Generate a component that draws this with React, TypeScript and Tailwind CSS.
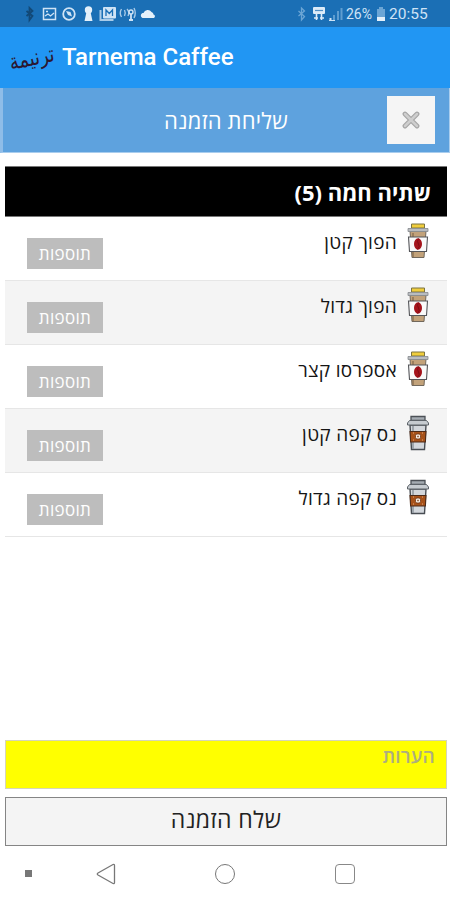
import React from "react";

type Drink = {
  name: string;
  cup: "latte" | "nes";
};

const drinks: Drink[] = [
  { name: "הפוך קטן", cup: "latte" },
  { name: "הפוך גדול", cup: "latte" },
  { name: "אספרסו קצר", cup: "latte" },
  { name: "נס קפה קטן", cup: "nes" },
  { name: "נס קפה גדול", cup: "nes" },
];

const LatteCup = () => (
  <svg width="22" height="36" viewBox="0 0 22 36">
    <path d="M3 8h16l-2 26.500H5z" fill="#c2a27a" stroke="#71685c" strokeWidth="1" />
    <path d="M6 10v24" stroke="#8d7254" strokeWidth="1.500" />
    <path d="M4.500 1h13v4h-13z" fill="#f0cd3c" stroke="#7d7440" strokeWidth="1" />
    <path d="M1 5.500h20v3H1z" fill="#b9bcc0" stroke="#85898d" strokeWidth="0.800" />
    <path d="M1.500 14h19l-1 14.500h-17z" fill="#fafafa" stroke="#55565a" strokeWidth="1.100" />
    <ellipse cx="11" cy="21" rx="4" ry="5.800" fill="#a5141c" />
    <path d="M11.500 15.500q-2 3 0 5.500t-1 5.500" stroke="#7c0c13" strokeWidth="0.900" fill="none" />
  </svg>
);

const NesCup = () => (
  <svg width="22" height="36" viewBox="0 0 22 36">
    <path d="M3 10h16l-1.500 24.500h-13z" fill="#d3d7dc" stroke="#484d53" strokeWidth="1.400" />
    <path d="M6 11v23" stroke="#8e969e" strokeWidth="1.500" />
    <path d="M4 1.500h14v4H4z" fill="#a4abb2" stroke="#4b5056" strokeWidth="1.300" />
    <path d="M2.500 5.500h17l2 2.500v2h-21V8z" fill="#c6cbd0" stroke="#5d6369" strokeWidth="1" />
    <path d="M3 16.500h16l-.6 10.500H3.600z" fill="#a85219" stroke="#4e2b18" strokeWidth="1.100" />
    <rect x="8.500" y="19" width="5" height="5" rx="1.500" fill="#f6eadf" stroke="#6b3415" strokeWidth="0.800" />
    <path d="M11 20.500v2M10 21.500h2" stroke="#8a5430" strokeWidth="0.700" />
    <path d="M6 18h1M15 18h1M6 25h1M15 25h1" stroke="#e3a77e" />
  </svg>
);

const StatusBar = () => (
  <div className="flex h-[27px] items-center bg-[#1b6fb5] text-[#cfe3f5]">
    <svg className="ml-[23px]" width="134" height="18" viewBox="23 5 134 18" fill="none">
      {/* bluetooth */}
      <path d="M26.500 11l6 5-3 4V8l3 3-6 5" stroke="#124977" strokeWidth="1.800" />
      {/* picture */}
      <rect x="43.500" y="8.500" width="12" height="11" stroke="#cfe3f5" strokeWidth="1.500" />
      <path d="M45 16l3-2 2.500 2 3.500-3M46 11.500h2" stroke="#cfe3f5" strokeWidth="1.300" />
      {/* compass */}
      <circle cx="69" cy="14" r="5.800" stroke="#cfe3f5" strokeWidth="1.800" />
      <path d="M66 11l4.500 1 1.500 4.500-4-1.500z" fill="#cfe3f5" />
      {/* keyhole */}
      <circle cx="88.500" cy="10" r="3.700" fill="#e4f0fa" />
      <path d="M86.500 12h4l2 9h-8z" fill="#e4f0fa" />
      {/* mail */}
      <path d="M100.500 10v10h13" stroke="#a9cbe8" strokeWidth="2" />
      <rect x="103" y="7" width="13" height="11.500" rx="1" fill="#cfe3f5" />
      <path d="M106 16v-6l3.300 3.500L112.500 10v6" stroke="#1b6fb5" strokeWidth="1.300" />
      {/* signal waves */}
      <path d="M121.500 9q-2.500 4 0 8M124.500 10q1.500 3 0 6M127 9q3 3 1 7M134 8q2.500 5 0 10" stroke="#a9cbe8" strokeWidth="1.400" />
      <circle cx="131" cy="12" r="2" stroke="#cfe3f5" strokeWidth="1.400" />
      <path d="M131 14v6M129 20h4" stroke="#cfe3f5" strokeWidth="1.800" />
      {/* cloud */}
      <path d="M142.500 18a2.700 2.700 0 010-5h1a4.500 4.500 0 018-1q2 .5 2 2.500a1.900 1.900 0 01.500 3.500z" fill="#e4f0fa" />
    </svg>

    <svg className="ml-auto" width="48" height="18" viewBox="295 5 48 18" fill="none">
      <path d="M297.500 11l6 5.500-3 3.500V8l3 3-6 5" stroke="#6ba5d5" strokeWidth="1.300" />
      <rect x="312" y="7" width="12" height="7" rx="1" fill="#dcebf8" />
      <path d="M314 10.500h8" stroke="#4f8fc6" strokeWidth="1.200" />
      <path d="M315.500 14v6M320.500 14v6M313 18h4M319 18h4" stroke="#dcebf8" strokeWidth="1.600" />
      <path d="M329.500 20v-2" stroke="#cfe3f5" strokeWidth="2" />
      <path d="M333 20v-5M337 20v-9M340.500 20V8" stroke="#5f9dd0" strokeWidth="2" />
      <path d="M328 20.500h6" stroke="#cfe3f5" />
    </svg>
    <span className="ml-[2px] w-[27px] whitespace-nowrap pt-px font-[Roboto] text-[14px]">26%</span>
    <svg className="ml-[3px]" width="10" height="16" viewBox="0 0 10 16">
      <path d="M3 1h4v2h2v12H1V3h2z" fill="#6ba5d5" />
      <path d="M1 11h8v4H1z" fill="#e4f0fa" />
    </svg>
    <span className="ml-[3px] mr-[22px] w-[39px] whitespace-nowrap pt-0.5 font-[Roboto] text-[15.500px]">20:55</span>
  </div>
);

const App = () => {
  return (
    <div className="flex h-[900px] w-[450px] flex-col overflow-hidden bg-white font-['Open_Sans','Noto_Sans',sans-serif]">
      <StatusBar />

      {/* app bar */}
      <div className="flex h-[61px] items-center bg-[#2196f3]">
        <div className="ml-[9px] flex h-10 w-[46px] items-center justify-center">
          <span dir="rtl" className="-rotate-12 scale-y-125 whitespace-nowrap font-['DejaVu_Sans',sans-serif] text-[18px] leading-none text-[#2b1730]">
            ترنيمة
          </span>
        </div>
        <h1 className="ml-[7px] whitespace-nowrap pb-[2px] font-[Roboto] text-[24px] font-medium leading-none text-white">Tarnema Caffee</h1>
      </div>

      {/* title */}
      <div className="grid h-[65px] shrink-0 grid-cols-[1fr_156px_1fr] items-center border-b border-l-[3px] border-r border-b-[#a9cdee] border-l-[#8fbde8] border-r-[#a9cdee] bg-[#5ea2de]">
        <span></span>
        <h2 dir="rtl" className="whitespace-nowrap text-center text-[22px] leading-none tracking-[0.2px] text-white">שליחת הזמנה</h2>
        <button className="mr-[14px] flex h-12 w-12 items-center justify-center justify-self-end bg-[#f5f5f5]">
          <svg width="18" height="18" viewBox="0 0 18 18" strokeLinecap="round">
            <path d="M3 3l12 12M15 3L3 15" stroke="#a5a5a5" strokeWidth="4.800" />
            <path d="M3 3l12 12M15 3L3 15" stroke="#cecece" strokeWidth="2.500" />
          </svg>
        </button>
      </div>

      {/* drinks list */}
      <div className="ml-[5px] mr-[3px] mt-[13px]">
        <div dir="rtl" className="flex h-[51px] items-center border-y border-[#777] bg-black pr-4 pt-0.5 text-[22px] font-bold text-white">
          שתיה חמה (5)
        </div>
        {drinks.map((drink) => (
          <div key={drink.name} dir="rtl" className="flex h-16 items-start border-b border-[#e6e6e6] odd:bg-[#f4f4f4]">
            <div className="mr-[18px] mt-[6px] h-9 w-[22px]">{drink.cup === "latte" ? <LatteCup /> : <NesCup />}</div>
            <span className="mr-[10px] mt-[13px] whitespace-nowrap text-[19px] leading-6 tracking-[0.3px] text-[#151515]">{drink.name}</span>
            <button className="mb-3 ml-[22px] mr-auto mt-[21px] h-[31px] w-[76px] bg-[#bdbdbd] text-[17px] leading-[31px] tracking-[0.300px] text-white">תוספות</button>
          </div>
        ))}
      </div>

      {/* notes + send */}
      <div className="ml-[5px] mr-[3px] mt-auto">
        <div dir="rtl" className="h-[49px] border border-[#d5d5b8] bg-[#ffff00] pr-[11px] pt-[3px] text-[19px] font-semibold leading-6 tracking-[0.2px] text-[#adad80]">
          הערות
        </div>
        <button dir="rtl" className="mt-2 block h-[49px] w-full border border-[#858585] bg-[#f4f4f4] pb-[5px] text-[23px] leading-none tracking-[0.400px] text-[#222]">
          שלח הזמנה
        </button>
      </div>

      {/* android navigation */}
      <div className="flex h-[54px] shrink-0 items-center pt-px">
        <div className="ml-[25px] h-[7px] w-[7px] bg-[#777]"></div>
        <svg className="ml-[64px]" width="20" height="22" viewBox="0 0 20 22" fill="none">
          <path d="M17 1.500q1.500-.5 1.500 1v17q0 1.500-1.500 1L2 12q-1.500-1 0-2z" stroke="#777" strokeWidth="1.300" />
        </svg>
        <div className="ml-[99px] h-5 w-5 rounded-full border-[1.500px] border-[#777]"></div>
        <div className="ml-[100px] h-5 w-5 rounded-[4px] border-[1.500px] border-[#888]"></div>
      </div>
    </div>
  );
};

export default App;
